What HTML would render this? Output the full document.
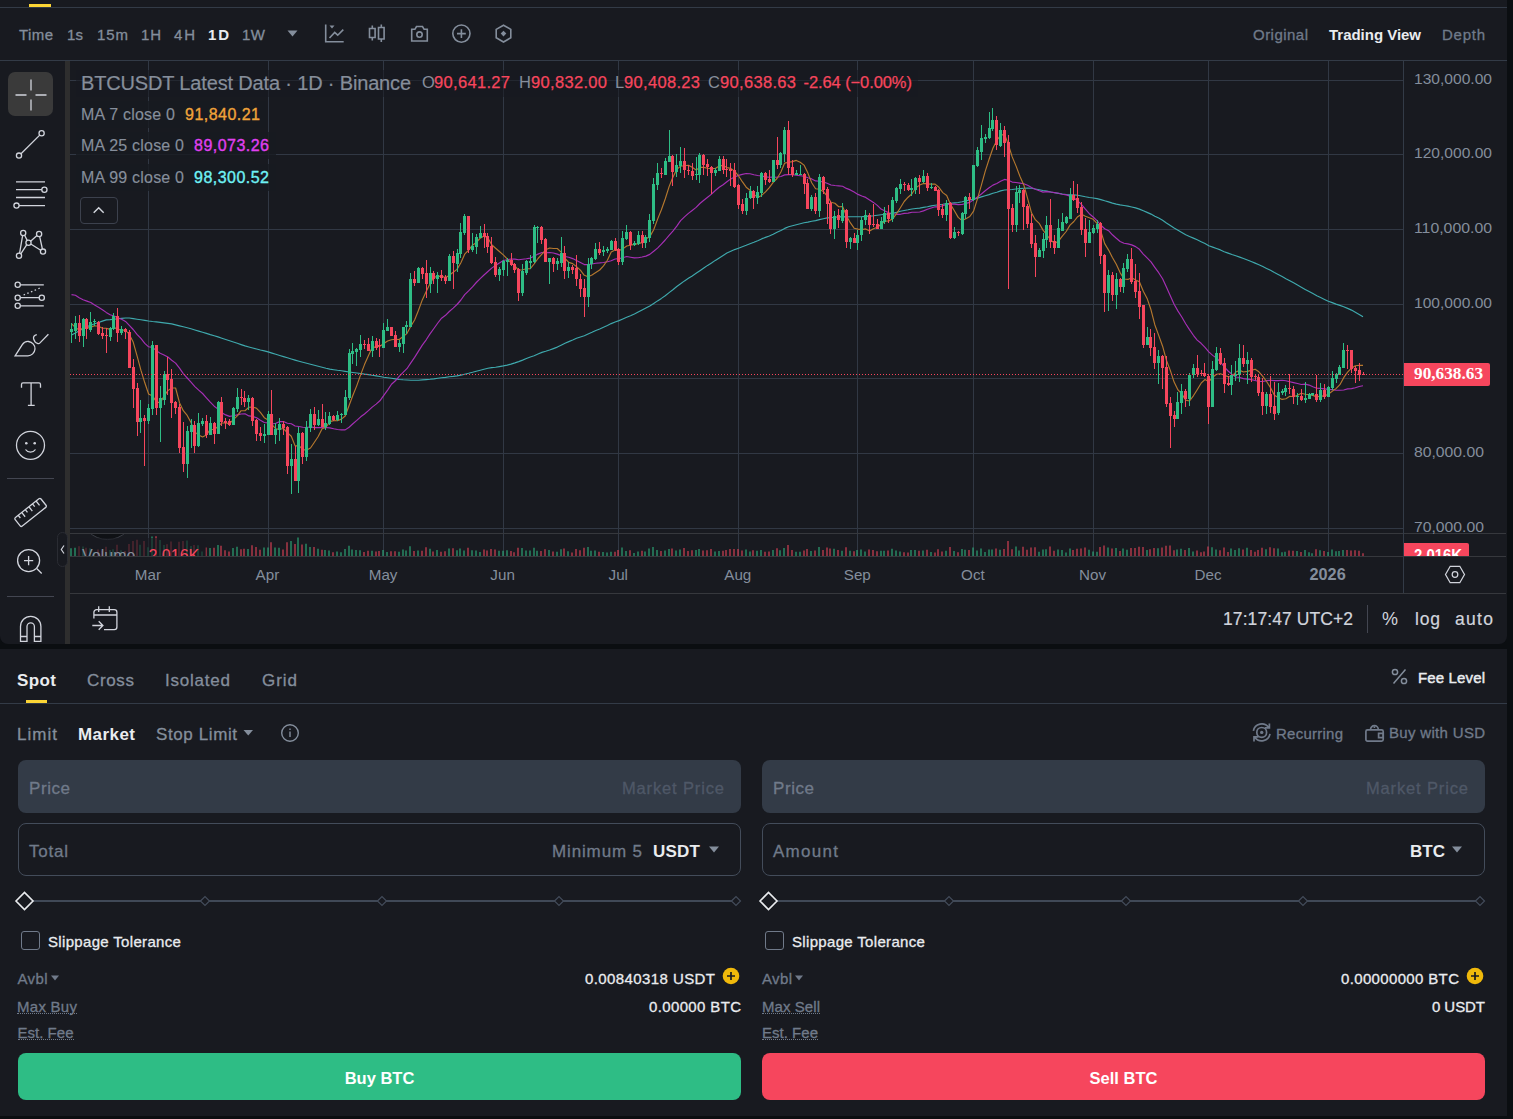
<!DOCTYPE html><html><head><meta charset="utf-8"><title>BTCUSDT</title><style>
*{box-sizing:border-box;margin:0;padding:0}
html,body{width:1513px;height:1119px;overflow:hidden;background:#0b0e11;font-family:"Liberation Sans",sans-serif}
.t{position:absolute;white-space:nowrap}
#chartp{position:absolute;left:0;top:0;width:1507px;height:644px;background:#181a20;border-radius:0 0 8px 8px;overflow:hidden}
#lower{position:absolute;left:0;top:649px;width:1507px;height:467px;background:#181a20;overflow:hidden}
.hl{position:absolute;height:1px;background:#333b47}
.vl{position:absolute;width:1px;background:#333b47}
svg.i{position:absolute;overflow:visible}
.inp{position:absolute;height:53px;width:723px;border-radius:8px}
.dis{background:#333b47}
.brd{border:1px solid #434c5a}
.btn{position:absolute;height:47px;width:723px;border-radius:8px;top:404px;color:#fff;font-weight:700;font-size:16.5px;text-align:center;line-height:50px}
.cb{position:absolute;width:19px;height:19px;border:1px solid #707a8a;border-radius:3px;top:282px}
.du{border-bottom:1px dotted #707a8a}
</style></head><body>
<div id="chartp">
<div class="hl" style="left:0;top:7px;width:1507px"></div>
<div style="position:absolute;left:29px;top:4px;width:22px;height:3px;background:#fcd535"></div>
<div class="hl" style="left:0;top:60px;width:1507px"></div>
<span class="t" style="letter-spacing:0.41px;font-size:15px;color:#848e9c;font-weight:400;top:25.5px;height:18.0px;line-height:18.0px;left:19px;-webkit-text-stroke:0.3px;">Time</span>
<span class="t" style="letter-spacing:0.16px;font-size:15px;color:#848e9c;font-weight:400;top:25.5px;height:18.0px;line-height:18.0px;left:67px;-webkit-text-stroke:0.3px;">1s</span>
<span class="t" style="letter-spacing:0.91px;font-size:15px;color:#848e9c;font-weight:400;top:25.5px;height:18.0px;line-height:18.0px;left:97px;-webkit-text-stroke:0.3px;">15m</span>
<span class="t" style="letter-spacing:0.81px;font-size:15px;color:#848e9c;font-weight:400;top:25.5px;height:18.0px;line-height:18.0px;left:141px;-webkit-text-stroke:0.3px;">1H</span>
<span class="t" style="letter-spacing:1.81px;font-size:15px;color:#848e9c;font-weight:400;top:25.5px;height:18.0px;line-height:18.0px;left:174px;-webkit-text-stroke:0.3px;">4H</span>
<span class="t" style="letter-spacing:1.81px;font-size:15px;color:#eaecef;font-weight:700;top:25.5px;height:18.0px;line-height:18.0px;left:208px;">1D</span>
<span class="t" style="letter-spacing:0.50px;font-size:15px;color:#848e9c;font-weight:400;top:25.5px;height:18.0px;line-height:18.0px;left:242px;-webkit-text-stroke:0.3px;">1W</span>
<span class="t" style="letter-spacing:0.47px;font-size:15px;color:#707a8a;font-weight:400;top:25.5px;height:18.0px;line-height:18.0px;left:1253px;-webkit-text-stroke:0.3px;">Original</span>
<span class="t" style="letter-spacing:-0.02px;font-size:15px;color:#eaecef;font-weight:700;top:25.5px;height:18.0px;line-height:18.0px;left:1329px;">Trading View</span>
<span class="t" style="letter-spacing:0.74px;font-size:15px;color:#707a8a;font-weight:400;top:25.5px;height:18.0px;line-height:18.0px;left:1442px;-webkit-text-stroke:0.3px;">Depth</span>
<svg class="i" style="left:0;top:0" width="600" height="61" fill="none" stroke="#848e9c" stroke-width="1.6">
<path d="M287.5 30.5h10l-5 6z" fill="#848e9c" stroke="none"/>
<path d="M325.7 24.5v17.3h18M329.5 38l5.2-5.6 3 2.8 5.6-5.6" /><path d="M329.5 25.6h5l-2.5 3z" fill="#848e9c" stroke="none"/>
<path d="M372.3 25.5v3m0 9v3M369.5 28.5h5.6v9h-5.6zM381.3 24.5v3m0 11.5v3M378.5 27.5h5.6v11.5h-5.6z"/>
<path d="M411.7 41V29.3h3.2l1.6-2.8h6l1.6 2.8h3.2V41z"/><circle cx="419.5" cy="34.6" r="2.7"/>
<circle cx="461.4" cy="33.6" r="8.6"/><path d="M457 33.6h8.8M461.4 29.2v8.8"/>
<path d="M503.5 25.2l7.3 4.2v8.4l-7.3 4.2-7.3-4.2v-8.4z"/><path d="M503.5 30.8l2.8 2.8-2.8 2.8-2.8-2.8z" fill="#848e9c" stroke="none"/>
</svg>
<div style="position:absolute;left:65px;top:61px;width:5px;height:583px;background:#2e2e2e"></div>
<div style="position:absolute;left:8px;top:72px;width:45px;height:44px;border-radius:7px;background:#3a3a3a"></div>
<svg class="i" style="left:0;top:0" width="70" height="644" fill="none" stroke="#d1d4dc" stroke-width="1.3">
<path d="M31 79.5v11M31 99.5v11M15.5 95h11M35.5 95h11"/>
<circle cx="41.6" cy="133.2" r="2.6"/><circle cx="19" cy="155.6" r="2.6"/><path d="M21 153.7L39.7 135.1"/>
<path d="M16 181.8h29M16 189.7h26M16 197.5h29M19 205.6h26"/><circle cx="44.4" cy="189.7" r="2.6"/><circle cx="16.5" cy="205.6" r="2.6"/>
<circle cx="23.2" cy="233" r="2.6"/><circle cx="39.1" cy="234" r="2.6"/><circle cx="28.5" cy="242.7" r="2.6"/><circle cx="43" cy="251.6" r="2.6"/><circle cx="19" cy="255.7" r="2.6"/>
<path d="M22.6 235.6L19.6 253.1M24.6 235.2L27.2 240.4M20.8 253.8L26.8 244.7M30.6 241.2L37 235.6M30.8 244L40.7 250.3M39.7 236.6L42.4 249"/>
<circle cx="17.7" cy="284.8" r="2.6"/><circle cx="17.7" cy="297.7" r="2.6"/><circle cx="41.8" cy="297.7" r="2.6"/><circle cx="17.7" cy="305.8" r="2.6"/>
<path d="M20.3 284.8h23.5M20.3 297.7h19M20.3 305.8h23.5"/><path d="M23.6 295L41.3 287.5" stroke-dasharray="1.5 2.5"/>
<path d="M15.1 355.9L22.3 344.7C24 342 26.5 341.3 28.5 341.5C32.5 342 35.3 345.5 35 349C34.6 353 31.5 355.8 28 355.8Z"/><path d="M36.8 334.6C34.5 335.2 33.2 336.8 33.6 338.8C34.2 341.2 36 343 38 343.6C38.8 343.8 39.5 343.4 40 342.9L48.4 334.2"/>
<path d="M21.5 387.7v-3.3a1.5 1.5 0 0 1 1.5-1.5h16a1.5 1.5 0 0 1 1.5 1.5v3.3M31.1 382.9V405.4M27.9 405.4h6.8"/>
<circle cx="30.5" cy="445.3" r="14"/><circle cx="26.3" cy="443.3" r="1.3" fill="#d1d4dc" stroke="none"/><circle cx="34.7" cy="443.3" r="1.3" fill="#d1d4dc" stroke="none"/><path d="M25.5 449.5c2.5 3.6 7.5 3.6 10 0"/>
<g transform="translate(30.6 512.4) rotate(-38.5)"><rect x="-16.5" y="-5.5" width="33" height="11" rx="1.5"/><path d="M-11.5 -5.5v3.5M-7 -5.5v5.5M-2.4 -5.5v3.5M2.2 -5.5v5.5M6.8 -5.5v3.5M11.4 -5.5v5.5"/></g>
<circle cx="28.6" cy="560.6" r="11"/><path d="M24 560.6h9.2M28.6 556v9.2M36.7 568.5l5 5"/>
<path d="M20.5 641.4V626.5a10.2 10.2 0 0 1 20.4 0v14.9h-6.5V626.5a3.7 3.7 0 0 0-7.4 0v14.9zM20.5 636.5h6.5M34.4 636.5h6.5"/>
</svg>
<div class="hl" style="left:7px;top:478px;width:47px;background:#434651"></div>
<div class="hl" style="left:7px;top:596px;width:47px;background:#434651"></div>
<svg width="1507" height="594" viewBox="0 0 1507 594" style="position:absolute;left:0;top:0">
<defs><clipPath id="cp"><rect x="70" y="61" width="1333" height="472"/></clipPath><clipPath id="cv"><rect x="70" y="534" width="1333" height="22"/></clipPath><clipPath id="ca"><rect x="1404" y="534" width="103" height="22"/></clipPath></defs>
<path d="M148.5 61V556M268.5 61V556M383.5 61V556M503.5 61V556M618.5 61V556M738.5 61V556M857.5 61V556M973.5 61V556M1093.5 61V556M1208.5 61V556M1328.5 61V556M70 80.5H1403M70 154.5H1403M70 229.5H1403M70 304.5H1403M70 378.5H1403M70 453.5H1403M70 528.5H1403" stroke="#313844" stroke-width="1" fill="none" shape-rendering="crispEdges"/>
<g clip-path="url(#cp)" fill="none" stroke-width="1.15" stroke-linejoin="round">
<path d="M71.5 335.1 L75.4 333.0 L79.2 330.8 L83.1 328.7 L86.9 326.6 L90.8 325.2 L94.6 323.8 L98.5 322.5 L102.4 321.1 L106.2 319.9 L110.1 319.6 L113.9 319.2 L117.8 318.8 L121.6 318.4 L125.5 318.0 L129.3 318.0 L133.2 318.6 L137.0 319.2 L140.9 319.8 L144.8 320.4 L148.6 321.0 L152.5 321.5 L156.3 321.9 L160.2 322.4 L164.0 322.9 L167.9 323.4 L171.7 323.9 L175.6 324.9 L179.5 325.9 L183.3 326.8 L187.2 327.8 L191.0 328.8 L194.9 330.0 L198.7 331.1 L202.6 332.3 L206.4 333.4 L210.3 334.6 L214.2 335.7 L218.0 336.9 L221.9 338.2 L225.7 339.5 L229.6 340.8 L233.4 342.0 L237.3 343.3 L241.1 344.6 L245.0 345.9 L248.9 347.0 L252.7 348.0 L256.6 349.0 L260.4 350.0 L264.3 350.9 L268.1 351.9 L272.0 353.1 L275.8 354.3 L279.7 355.5 L283.5 356.6 L287.4 357.8 L291.3 359.0 L295.1 360.1 L299.0 361.2 L302.8 362.2 L306.7 363.2 L310.5 364.2 L314.4 365.3 L318.2 366.3 L322.1 367.3 L326.0 368.3 L329.8 369.1 L333.7 369.7 L337.5 370.3 L341.4 370.8 L345.2 371.4 L349.1 372.0 L352.9 372.5 L356.8 373.0 L360.7 373.5 L364.5 374.1 L368.4 374.6 L372.2 375.3 L376.1 375.9 L379.9 376.5 L383.8 377.2 L387.6 377.7 L391.5 378.3 L395.4 378.9 L399.2 379.5 L403.1 379.8 L406.9 380.0 L410.8 380.2 L414.6 380.3 L418.5 380.2 L422.3 379.9 L426.2 379.6 L430.0 379.3 L433.9 378.9 L437.8 378.3 L441.6 377.8 L445.5 377.4 L449.3 376.7 L453.2 376.4 L457.0 375.9 L460.9 375.1 L464.7 374.2 L468.6 373.3 L472.5 372.3 L476.3 371.2 L480.2 370.2 L484.0 369.2 L487.9 368.3 L491.7 367.6 L495.6 367.2 L499.4 366.6 L503.3 365.9 L507.2 365.1 L511.0 364.1 L514.9 362.9 L518.7 361.6 L522.6 360.1 L526.4 358.5 L530.3 357.0 L534.1 355.8 L538.0 354.0 L541.9 352.4 L545.7 351.3 L549.6 350.0 L553.4 348.6 L557.3 347.1 L561.1 345.2 L565.0 343.2 L568.8 341.6 L572.7 340.0 L576.5 338.3 L580.4 337.0 L584.3 335.7 L588.1 334.0 L592.0 332.3 L595.8 330.5 L599.7 329.0 L603.5 327.2 L607.4 325.5 L611.2 323.6 L615.1 322.0 L619.0 320.6 L622.8 319.0 L626.7 317.3 L630.5 315.8 L634.4 314.0 L638.2 312.0 L642.1 310.0 L645.9 308.0 L649.8 306.1 L653.7 303.5 L657.5 300.9 L661.4 298.4 L665.2 295.7 L669.1 292.6 L672.9 289.7 L676.8 286.5 L680.6 283.8 L684.5 280.9 L688.4 278.3 L692.2 275.9 L696.1 273.3 L699.9 270.7 L703.8 268.0 L707.6 265.4 L711.5 263.0 L715.3 260.4 L719.2 257.9 L723.1 255.4 L726.9 253.1 L730.8 251.3 L734.6 249.6 L738.5 248.2 L742.3 246.8 L746.2 245.3 L750.0 243.7 L753.9 242.3 L757.7 240.7 L761.6 238.9 L765.5 237.4 L769.3 236.0 L773.2 234.2 L777.0 232.3 L780.9 230.4 L784.7 228.4 L788.6 226.8 L792.4 225.8 L796.3 224.7 L800.2 223.7 L804.0 222.8 L807.9 222.1 L811.7 221.3 L815.6 220.6 L819.4 219.6 L823.3 218.7 L827.1 217.9 L831.0 217.7 L834.9 217.2 L838.7 216.9 L842.6 216.6 L846.4 216.9 L850.3 216.8 L854.1 216.7 L858.0 216.7 L861.8 216.6 L865.7 216.4 L869.6 216.1 L873.4 215.8 L877.3 215.3 L881.1 214.8 L885.0 214.3 L888.8 213.9 L892.7 213.3 L896.5 212.4 L900.4 211.3 L904.2 210.5 L908.1 209.8 L912.0 209.0 L915.8 208.5 L919.7 208.1 L923.5 207.4 L927.4 206.7 L931.2 205.9 L935.1 205.2 L938.9 204.7 L942.8 204.3 L946.7 203.6 L950.5 203.3 L954.4 202.9 L958.2 202.5 L962.1 201.7 L965.9 200.7 L969.8 200.0 L973.6 199.1 L977.5 198.1 L981.4 196.9 L985.2 195.8 L989.1 194.6 L992.9 193.3 L996.8 192.3 L1000.6 190.9 L1004.5 190.0 L1008.3 189.7 L1012.2 189.5 L1016.1 189.0 L1019.9 188.6 L1023.8 188.2 L1027.6 188.1 L1031.5 188.3 L1035.3 189.0 L1039.2 189.8 L1043.0 190.5 L1046.9 191.1 L1050.7 192.0 L1054.6 192.7 L1058.5 193.4 L1062.3 194.0 L1066.2 194.5 L1070.0 194.7 L1073.9 194.9 L1077.7 195.3 L1081.6 196.0 L1085.4 196.8 L1089.3 197.5 L1093.2 198.0 L1097.0 198.6 L1100.9 199.6 L1104.7 200.8 L1108.6 201.9 L1112.4 203.1 L1116.3 204.1 L1120.1 204.9 L1124.0 205.5 L1127.9 206.1 L1131.7 207.0 L1135.6 207.9 L1139.4 209.1 L1143.3 210.8 L1147.1 212.4 L1151.0 214.1 L1154.8 216.2 L1158.7 218.1 L1162.6 220.3 L1166.4 223.0 L1170.3 225.5 L1174.1 228.0 L1178.0 230.3 L1181.8 232.5 L1185.7 234.7 L1189.5 236.4 L1193.4 238.1 L1197.2 239.8 L1201.1 241.7 L1205.0 243.6 L1208.8 245.7 L1212.7 247.1 L1216.5 248.5 L1220.4 249.9 L1224.2 251.7 L1228.1 253.1 L1231.9 254.5 L1235.8 255.8 L1239.7 257.1 L1243.5 258.5 L1247.4 260.0 L1251.2 261.5 L1255.1 263.1 L1258.9 264.7 L1262.8 266.6 L1266.6 268.4 L1270.5 270.3 L1274.4 272.5 L1278.2 274.5 L1282.1 276.6 L1285.9 278.7 L1289.8 280.7 L1293.6 282.8 L1297.5 285.0 L1301.3 287.2 L1305.2 289.4 L1309.1 291.5 L1312.9 293.6 L1316.8 295.7 L1320.6 297.5 L1324.5 299.4 L1328.3 301.2 L1332.2 302.6 L1336.0 304.1 L1339.9 305.4 L1343.7 306.8 L1347.6 308.4 L1351.5 310.1 L1355.3 312.2 L1359.2 314.4 L1363.0 316.8" stroke="#3fa9ad"/>
<path d="M71.5 294.6 L75.4 295.3 L79.2 297.8 L83.1 299.7 L86.9 301.1 L90.8 302.5 L94.6 305.0 L98.5 307.3 L102.4 309.7 L106.2 312.4 L110.1 314.8 L113.9 316.0 L117.8 317.8 L121.6 319.2 L125.5 321.4 L129.3 325.4 L133.2 329.5 L137.0 334.4 L140.9 338.3 L144.8 343.3 L148.6 346.8 L152.5 347.4 L156.3 350.6 L160.2 353.3 L164.0 355.0 L167.9 357.0 L171.7 360.2 L175.6 363.1 L179.5 368.2 L183.3 373.6 L187.2 378.0 L191.0 382.2 L194.9 386.6 L198.7 390.1 L202.6 393.5 L206.4 397.8 L210.3 402.1 L214.2 406.2 L218.0 409.1 L221.9 412.7 L225.7 414.9 L229.6 416.4 L233.4 415.8 L237.3 414.9 L241.1 414.0 L245.0 413.8 L248.9 415.9 L252.7 416.4 L256.6 417.8 L260.4 420.3 L264.3 422.5 L268.1 422.9 L272.0 424.0 L275.8 423.3 L279.7 421.6 L283.5 421.5 L287.4 423.2 L291.3 423.7 L295.1 426.0 L299.0 426.5 L302.8 427.3 L306.7 427.5 L310.5 426.7 L314.4 427.6 L318.2 427.5 L322.1 427.6 L326.0 427.5 L329.8 427.9 L333.7 428.8 L337.5 429.5 L341.4 429.9 L345.2 429.9 L349.1 427.2 L352.9 423.8 L356.8 420.4 L360.7 416.8 L364.5 414.0 L368.4 410.6 L372.2 407.1 L376.1 404.1 L379.9 400.8 L383.8 395.3 L387.6 390.1 L391.5 384.3 L395.4 380.8 L399.2 376.3 L403.1 372.3 L406.9 368.7 L410.8 362.9 L414.6 357.4 L418.5 351.1 L422.3 345.1 L426.2 339.8 L430.0 333.9 L433.9 328.5 L437.8 323.0 L441.6 318.2 L445.5 315.3 L449.3 311.5 L453.2 308.1 L457.0 304.5 L460.9 300.0 L464.7 294.6 L468.6 290.9 L472.5 286.9 L476.3 282.5 L480.2 278.6 L484.0 275.0 L487.9 271.5 L491.7 268.1 L495.6 265.4 L499.4 263.0 L503.3 260.5 L507.2 259.7 L511.0 259.0 L514.9 259.1 L518.7 259.8 L522.6 259.3 L526.4 258.8 L530.3 258.1 L534.1 256.2 L538.0 254.1 L541.9 252.5 L545.7 252.7 L549.6 252.5 L553.4 253.0 L557.3 254.1 L561.1 255.6 L565.0 256.5 L568.8 257.3 L572.7 258.6 L576.5 260.5 L580.4 262.6 L584.3 264.6 L588.1 264.6 L592.0 264.0 L595.8 263.2 L599.7 262.9 L603.5 262.5 L607.4 261.8 L611.2 260.7 L615.1 259.0 L619.0 258.6 L622.8 257.7 L626.7 256.5 L630.5 257.2 L634.4 257.9 L638.2 257.7 L642.1 257.0 L645.9 256.1 L649.8 254.4 L653.7 251.3 L657.5 248.1 L661.4 244.2 L665.2 240.0 L669.1 235.4 L672.9 231.1 L676.8 226.1 L680.6 220.7 L684.5 216.9 L688.4 213.4 L692.2 210.5 L696.1 207.4 L699.9 203.5 L703.8 200.2 L707.6 197.2 L711.5 194.1 L715.3 190.5 L719.2 187.3 L723.1 184.8 L726.9 181.8 L730.8 178.9 L734.6 177.0 L738.5 175.4 L742.3 174.4 L746.2 173.5 L750.0 173.8 L753.9 174.8 L757.7 175.5 L761.6 176.0 L765.5 176.9 L769.3 177.3 L773.2 177.1 L777.0 177.2 L780.9 176.5 L784.7 174.9 L788.6 174.6 L792.4 174.6 L796.3 175.3 L800.2 175.7 L804.0 176.3 L807.9 177.8 L811.7 178.9 L815.6 180.9 L819.4 181.2 L823.3 182.0 L827.1 183.3 L831.0 185.0 L834.9 185.5 L838.7 185.9 L842.6 186.3 L846.4 188.4 L850.3 189.9 L854.1 192.0 L858.0 194.4 L861.8 196.0 L865.7 197.4 L869.6 200.0 L873.4 202.4 L877.3 205.4 L881.1 209.1 L885.0 210.9 L888.8 212.7 L892.7 213.8 L896.5 214.3 L900.4 214.3 L904.2 213.4 L908.1 213.1 L912.0 212.2 L915.8 212.3 L919.7 212.0 L923.5 210.9 L927.4 209.2 L931.2 208.0 L935.1 206.8 L938.9 206.8 L942.8 205.8 L946.7 204.4 L950.5 204.2 L954.4 204.1 L958.2 204.6 L962.1 204.5 L965.9 203.4 L969.8 202.4 L973.6 199.8 L977.5 197.0 L981.4 194.0 L985.2 190.7 L989.1 187.8 L992.9 185.1 L996.8 183.5 L1000.6 181.3 L1004.5 179.4 L1008.3 180.2 L1012.2 182.1 L1016.1 182.5 L1019.9 183.1 L1023.8 183.8 L1027.6 185.3 L1031.5 187.4 L1035.3 189.3 L1039.2 190.7 L1043.0 192.1 L1046.9 191.6 L1050.7 192.0 L1054.6 192.6 L1058.5 193.2 L1062.3 194.2 L1066.2 194.9 L1070.0 196.1 L1073.9 198.0 L1077.7 200.9 L1081.6 204.6 L1085.4 209.2 L1089.3 213.7 L1093.2 217.0 L1097.0 220.7 L1100.9 225.3 L1104.7 228.7 L1108.6 230.7 L1112.4 234.8 L1116.3 238.3 L1120.1 241.5 L1124.0 243.3 L1127.9 243.9 L1131.7 244.9 L1135.6 246.6 L1139.4 249.3 L1143.3 254.1 L1147.1 257.9 L1151.0 261.9 L1154.8 267.3 L1158.7 272.7 L1162.6 278.7 L1166.4 287.1 L1170.3 295.7 L1174.1 304.2 L1178.0 311.1 L1181.8 317.0 L1185.7 323.7 L1189.5 329.6 L1193.4 335.3 L1197.2 340.1 L1201.1 343.3 L1205.0 347.3 L1208.8 351.8 L1212.7 355.4 L1216.5 358.0 L1220.4 361.9 L1224.2 366.9 L1228.1 371.0 L1231.9 374.3 L1235.8 377.0 L1239.7 377.5 L1243.5 378.6 L1247.4 379.1 L1251.2 379.6 L1255.1 380.5 L1258.9 381.5 L1262.8 381.5 L1266.6 380.6 L1270.5 380.2 L1274.4 380.6 L1278.2 380.6 L1282.1 380.3 L1285.9 380.8 L1289.8 381.7 L1293.6 382.6 L1297.5 383.5 L1301.3 384.5 L1305.2 384.1 L1309.1 385.1 L1312.9 386.8 L1316.8 388.2 L1320.6 388.4 L1324.5 388.9 L1328.3 389.4 L1332.2 389.6 L1336.0 390.2 L1339.9 390.3 L1343.7 390.0 L1347.6 388.9 L1351.5 388.6 L1355.3 387.7 L1359.2 386.5 L1363.0 385.7" stroke="#a62fb5"/>
<path d="M71.5 323.6 L75.4 327.6 L79.2 329.9 L83.1 328.4 L86.9 328.3 L90.8 327.1 L94.6 325.7 L98.5 326.3 L102.4 328.2 L106.2 328.2 L110.1 329.4 L113.9 327.5 L117.8 329.1 L121.6 330.2 L125.5 330.0 L129.3 334.5 L133.2 342.1 L137.0 355.6 L140.9 370.2 L144.8 382.8 L148.6 394.0 L152.5 395.9 L156.3 401.6 L160.2 403.0 L164.0 396.1 L167.9 390.6 L171.7 388.0 L175.6 388.0 L179.5 402.7 L183.3 410.7 L187.2 415.4 L191.0 422.6 L194.9 432.1 L198.7 435.0 L202.6 436.9 L206.4 435.1 L210.3 429.2 L214.2 429.7 L218.0 426.4 L221.9 423.0 L225.7 423.0 L229.6 423.6 L233.4 419.6 L237.3 415.9 L241.1 410.7 L245.0 410.7 L248.9 407.3 L252.7 407.0 L256.6 408.3 L260.4 412.4 L264.3 417.7 L268.1 419.9 L272.0 424.6 L275.8 428.9 L279.7 429.3 L283.5 428.5 L287.4 432.8 L291.3 436.3 L295.1 445.9 L299.0 445.7 L302.8 449.6 L306.7 450.1 L310.5 448.0 L314.4 442.2 L318.2 436.5 L322.1 428.7 L326.0 427.3 L329.8 421.6 L333.7 420.6 L337.5 420.7 L341.4 419.1 L345.2 416.0 L349.1 405.5 L352.9 395.2 L356.8 385.6 L360.7 374.6 L364.5 364.6 L368.4 355.7 L372.2 347.6 L376.1 346.9 L379.9 346.2 L383.8 343.5 L387.6 341.0 L391.5 339.8 L395.4 339.2 L399.2 339.5 L403.1 336.5 L406.9 333.6 L410.8 326.3 L414.6 320.0 L418.5 310.3 L422.3 299.9 L426.2 291.4 L430.0 283.7 L433.9 277.1 L437.8 276.6 L441.6 275.9 L445.5 277.8 L449.3 275.2 L453.2 272.2 L457.0 269.4 L460.9 262.7 L464.7 254.2 L468.6 250.2 L472.5 245.2 L476.3 242.5 L480.2 238.2 L484.0 235.9 L487.9 238.0 L491.7 244.7 L495.6 248.2 L499.4 251.5 L503.3 254.9 L507.2 258.8 L511.0 262.8 L514.9 266.0 L518.7 270.3 L522.6 269.8 L526.4 268.7 L530.3 268.6 L534.1 264.0 L538.0 258.5 L541.9 254.2 L545.7 249.8 L549.6 248.0 L553.4 248.5 L557.3 248.5 L561.1 252.2 L565.0 258.5 L568.8 262.4 L572.7 263.6 L576.5 266.6 L580.4 270.1 L584.3 275.3 L588.1 276.8 L592.0 275.0 L595.8 272.5 L599.7 270.0 L603.5 265.9 L607.4 260.2 L611.2 252.1 L615.1 250.1 L619.0 250.6 L622.8 248.9 L626.7 246.0 L630.5 245.3 L634.4 244.4 L638.2 243.6 L642.1 242.6 L645.9 239.1 L649.8 236.6 L653.7 229.7 L657.5 219.4 L661.4 209.7 L665.2 199.0 L669.1 186.6 L672.9 177.3 L676.8 169.4 L680.6 166.1 L684.5 165.7 L688.4 165.2 L692.2 167.3 L696.1 169.9 L699.9 167.4 L703.8 167.4 L707.6 168.3 L711.5 168.6 L715.3 168.5 L719.2 166.0 L723.1 165.4 L726.9 167.6 L730.8 168.4 L734.6 171.2 L738.5 175.8 L742.3 181.7 L746.2 187.2 L750.0 190.3 L753.9 194.4 L757.7 197.4 L761.6 195.4 L765.5 191.9 L769.3 187.6 L773.2 182.3 L777.0 178.5 L780.9 172.0 L784.7 163.1 L788.6 162.3 L792.4 161.6 L796.3 160.4 L800.2 162.3 L804.0 165.1 L807.9 173.1 L811.7 182.7 L815.6 188.8 L819.4 189.2 L823.3 191.5 L827.1 195.8 L831.0 202.2 L834.9 203.3 L838.7 206.7 L842.6 206.5 L846.4 215.8 L850.3 222.7 L854.1 228.2 L858.0 229.1 L861.8 229.6 L865.7 228.9 L869.6 231.0 L873.4 228.7 L877.3 227.3 L881.1 224.3 L885.0 221.1 L888.8 221.0 L892.7 218.8 L896.5 213.6 L900.4 207.7 L904.2 201.5 L908.1 197.2 L912.0 193.7 L915.8 187.8 L919.7 185.1 L923.5 183.4 L927.4 183.9 L931.2 184.1 L935.1 184.1 L938.9 187.3 L942.8 192.6 L946.7 195.5 L950.5 204.4 L954.4 210.8 L958.2 217.4 L962.1 220.6 L965.9 218.7 L969.8 216.5 L973.6 211.1 L977.5 198.6 L981.4 185.1 L985.2 171.4 L989.1 159.3 L992.9 148.2 L996.8 140.4 L1000.6 135.4 L1004.5 134.3 L1008.3 144.4 L1012.2 156.9 L1016.1 166.1 L1019.9 176.2 L1023.8 184.9 L1027.6 198.3 L1031.5 212.9 L1035.3 219.7 L1039.2 223.3 L1043.0 230.1 L1046.9 235.0 L1050.7 240.0 L1054.6 243.4 L1058.5 241.1 L1062.3 236.1 L1066.2 231.5 L1070.0 225.1 L1073.9 221.5 L1077.7 216.7 L1081.6 214.2 L1085.4 216.3 L1089.3 217.8 L1093.2 219.3 L1097.0 223.4 L1100.9 231.5 L1104.7 243.6 L1108.6 250.1 L1112.4 257.5 L1116.3 264.2 L1120.1 272.6 L1124.0 279.0 L1127.9 279.4 L1131.7 277.7 L1135.6 280.1 L1139.4 281.8 L1143.3 291.3 L1147.1 298.4 L1151.0 309.8 L1154.8 324.7 L1158.7 335.4 L1162.6 346.2 L1166.4 360.2 L1170.3 370.4 L1174.1 382.1 L1178.0 389.9 L1181.8 393.9 L1185.7 400.1 L1189.5 401.0 L1193.4 395.8 L1197.2 389.7 L1201.1 383.2 L1205.0 379.5 L1208.8 381.7 L1212.7 377.3 L1216.5 374.2 L1220.4 373.7 L1224.2 375.1 L1228.1 376.7 L1231.9 376.6 L1235.8 372.0 L1239.7 370.4 L1243.5 372.0 L1247.4 371.4 L1251.2 370.4 L1255.1 369.2 L1258.9 371.8 L1262.8 376.3 L1266.6 381.5 L1270.5 387.6 L1274.4 395.3 L1278.2 397.4 L1282.1 399.4 L1285.9 398.7 L1289.8 396.2 L1293.6 396.8 L1297.5 395.2 L1301.3 393.3 L1305.2 394.2 L1309.1 394.6 L1312.9 395.4 L1316.8 397.0 L1320.6 395.9 L1324.5 396.1 L1328.3 394.2 L1332.2 391.3 L1336.0 388.6 L1339.9 384.7 L1343.7 377.7 L1347.6 372.1 L1351.5 368.2 L1355.3 365.8 L1359.2 365.3 L1363.0 365.4" stroke="#b5782e"/>
</g>
<g clip-path="url(#cp)" shape-rendering="crispEdges"><path d="M71 323h1V343h-1ZM70 329h3V332h-3ZM75 316h1V339h-1ZM74 323h3V331h-3ZM83 318h1V347h-1ZM82 319h3V336h-3ZM90 312h1V332h-1ZM89 322h3V330h-3ZM94 319h1V326h-1ZM93 321h3V322h-3ZM110 327h1V341h-1ZM109 328h3V337h-3ZM113 313h1V330h-1ZM112 316h3V329h-3ZM121 326h1V335h-1ZM120 329h3V333h-3ZM140 400h1V433h-1ZM139 418h3V422h-3ZM148 404h1V424h-1ZM147 408h3V421h-3ZM152 341h1V415h-1ZM151 345h3V409h-3ZM160 386h1V442h-1ZM159 398h3V408h-3ZM164 371h1V405h-1ZM163 374h3V400h-3ZM187 426h1V478h-1ZM186 431h3V464h-3ZM191 419h1V448h-1ZM190 425h3V432h-3ZM198 413h1V447h-1ZM197 423h3V446h-3ZM202 418h1V426h-1ZM201 421h3V424h-3ZM210 417h1V435h-1ZM209 423h3V435h-3ZM218 401h1V434h-1ZM217 402h3V434h-3ZM233 407h1V425h-1ZM232 408h3V425h-3ZM237 388h1V412h-1ZM236 397h3V409h-3ZM248 395h1V410h-1ZM247 398h3V402h-3ZM264 424h1V443h-1ZM263 434h3V436h-3ZM268 411h1V435h-1ZM267 414h3V435h-3ZM275 423h1V444h-1ZM274 429h3V435h-3ZM279 418h1V441h-1ZM278 424h3V430h-3ZM291 444h1V494h-1ZM290 459h3V466h-3ZM298 427h1V493h-1ZM297 433h3V481h-3ZM306 421h1V461h-1ZM305 427h3V457h-3ZM310 409h1V432h-1ZM309 414h3V428h-3ZM318 410h1V426h-1ZM317 419h3V425h-3ZM325 412h1V430h-1ZM324 423h3V427h-3ZM329 412h1V425h-1ZM328 416h3V424h-3ZM337 411h1V421h-1ZM336 415h3V420h-3ZM341 413h1V423h-1ZM340 414h3V415h-3ZM345 390h1V415h-1ZM344 397h3V415h-3ZM349 349h1V400h-1ZM348 353h3V398h-3ZM352 343h1V364h-1ZM351 351h3V354h-3ZM356 348h1V366h-1ZM355 349h3V352h-3ZM360 335h1V357h-1ZM359 344h3V350h-3ZM372 336h1V357h-1ZM371 341h3V351h-3ZM383 323h1V348h-1ZM382 330h3V348h-3ZM387 319h1V331h-1ZM386 327h3V331h-3ZM399 340h1V352h-1ZM398 343h3V347h-3ZM403 327h1V353h-1ZM402 327h3V344h-3ZM406 321h1V334h-1ZM405 325h3V327h-3ZM410 273h1V327h-1ZM409 279h3V327h-3ZM418 267h1V283h-1ZM417 268h3V283h-3ZM430 267h1V293h-1ZM429 273h3V284h-3ZM437 272h1V293h-1ZM436 275h3V279h-3ZM449 254h1V281h-1ZM448 256h3V281h-3ZM457 249h1V272h-1ZM456 253h3V264h-3ZM460 223h1V258h-1ZM459 232h3V254h-3ZM464 214h1V235h-1ZM463 216h3V233h-3ZM472 233h1V252h-1ZM471 246h3V250h-3ZM476 234h1V254h-1ZM475 237h3V247h-3ZM480 226h1V238h-1ZM479 233h3V238h-3ZM499 267h1V281h-1ZM498 269h3V275h-3ZM503 260h1V276h-1ZM502 261h3V270h-3ZM507 258h1V276h-1ZM506 260h3V262h-3ZM522 264h1V296h-1ZM521 271h3V293h-3ZM526 260h1V275h-1ZM525 261h3V273h-3ZM530 255h1V269h-1ZM529 261h3V263h-3ZM534 225h1V263h-1ZM533 227h3V262h-3ZM537 226h1V243h-1ZM536 227h3V228h-3ZM549 258h1V284h-1ZM548 258h3V262h-3ZM557 258h1V270h-1ZM556 261h3V264h-3ZM561 237h1V267h-1ZM560 253h3V263h-3ZM568 262h1V278h-1ZM567 267h3V271h-3ZM588 258h1V307h-1ZM587 264h3V297h-3ZM591 257h1V269h-1ZM590 258h3V264h-3ZM595 243h1V260h-1ZM594 249h3V259h-3ZM603 246h1V256h-1ZM602 250h3V252h-3ZM607 247h1V253h-1ZM606 249h3V251h-3ZM611 240h1V250h-1ZM610 241h3V250h-3ZM622 231h1V265h-1ZM621 238h3V262h-3ZM626 225h1V240h-1ZM625 232h3V239h-3ZM634 241h1V246h-1ZM633 243h3V245h-3ZM638 231h1V245h-1ZM637 235h3V244h-3ZM645 235h1V248h-1ZM644 237h3V243h-3ZM649 214h1V242h-1ZM648 220h3V238h-3ZM653 178h1V224h-1ZM652 184h3V221h-3ZM657 163h1V190h-1ZM656 173h3V185h-3ZM665 158h1V175h-1ZM664 161h3V175h-3ZM669 130h1V162h-1ZM668 156h3V162h-3ZM676 154h1V177h-1ZM675 165h3V172h-3ZM680 147h1V173h-1ZM679 161h3V166h-3ZM696 157h1V180h-1ZM695 174h3V175h-3ZM699 153h1V183h-1ZM698 155h3V175h-3ZM715 168h1V176h-1ZM714 170h3V173h-3ZM719 156h1V171h-1ZM718 159h3V171h-3ZM746 193h1V215h-1ZM745 198h3V211h-3ZM750 186h1V199h-1ZM749 191h3V198h-3ZM757 186h1V204h-1ZM756 192h3V198h-3ZM761 172h1V197h-1ZM760 173h3V193h-3ZM773 160h1V182h-1ZM772 160h3V182h-3ZM780 152h1V168h-1ZM779 153h3V165h-3ZM784 127h1V162h-1ZM783 130h3V154h-3ZM796 170h1V175h-1ZM795 173h3V175h-3ZM800 165h1V175h-1ZM799 174h3V175h-3ZM811 195h1V211h-1ZM810 197h3V209h-3ZM819 174h1V217h-1ZM818 177h3V211h-3ZM834 211h1V239h-1ZM833 216h3V229h-3ZM842 203h1V223h-1ZM841 210h3V221h-3ZM850 237h1V249h-1ZM849 238h3V242h-3ZM857 230h1V250h-1ZM856 235h3V243h-3ZM861 217h1V241h-1ZM860 220h3V235h-3ZM865 210h1V225h-1ZM864 215h3V220h-3ZM881 217h1V229h-1ZM880 221h3V229h-3ZM884 207h1V224h-1ZM883 213h3V222h-3ZM892 197h1V222h-1ZM891 200h3V219h-3ZM896 187h1V203h-1ZM895 188h3V201h-3ZM900 179h1V194h-1ZM899 184h3V189h-3ZM911 179h1V196h-1ZM910 188h3V190h-3ZM915 177h1V194h-1ZM914 178h3V190h-3ZM923 170h1V183h-1ZM922 176h3V182h-3ZM931 183h1V189h-1ZM930 187h3V188h-3ZM946 200h1V221h-1ZM945 203h3V215h-3ZM954 227h1V239h-1ZM953 232h3V238h-3ZM962 212h1V235h-1ZM961 213h3V234h-3ZM965 196h1V219h-1ZM964 197h3V214h-3ZM973 165h1V201h-1ZM972 165h3V200h-3ZM977 147h1V167h-1ZM976 150h3V166h-3ZM981 125h1V160h-1ZM980 138h3V152h-3ZM985 134h1V143h-1ZM984 137h3V139h-3ZM989 112h1V139h-1ZM988 128h3V138h-3ZM992 108h1V131h-1ZM991 120h3V129h-3ZM1000 123h1V147h-1ZM999 130h3V146h-3ZM1016 186h1V232h-1ZM1015 192h3V225h-3ZM1019 185h1V203h-1ZM1018 190h3V193h-3ZM1039 248h1V257h-1ZM1038 250h3V257h-3ZM1043 233h1V258h-1ZM1042 239h3V251h-3ZM1046 216h1V248h-1ZM1045 225h3V240h-3ZM1058 219h1V248h-1ZM1057 228h3V248h-3ZM1062 213h1V231h-1ZM1061 222h3V231h-3ZM1066 216h1V224h-1ZM1065 217h3V223h-3ZM1070 188h1V219h-1ZM1069 195h3V219h-3ZM1089 220h1V243h-1ZM1088 232h3V243h-3ZM1093 225h1V234h-1ZM1092 228h3V233h-3ZM1097 220h1V233h-1ZM1096 224h3V229h-3ZM1108 270h1V311h-1ZM1107 275h3V293h-3ZM1116 273h1V309h-1ZM1115 279h3V295h-3ZM1123 263h1V293h-1ZM1122 268h3V287h-3ZM1127 254h1V272h-1ZM1126 259h3V269h-3ZM1147 327h1V345h-1ZM1146 337h3V345h-3ZM1158 350h1V384h-1ZM1157 356h3V363h-3ZM1177 392h1V419h-1ZM1176 402h3V419h-3ZM1181 384h1V414h-1ZM1180 391h3V403h-3ZM1189 373h1V406h-1ZM1188 375h3V399h-3ZM1193 364h1V378h-1ZM1192 368h3V375h-3ZM1212 361h1V407h-1ZM1211 369h3V407h-3ZM1216 347h1V371h-1ZM1215 353h3V370h-3ZM1231 365h1V395h-1ZM1230 375h3V385h-3ZM1235 361h1V381h-1ZM1234 374h3V376h-3ZM1239 344h1V382h-1ZM1238 358h3V375h-3ZM1247 352h1V384h-1ZM1246 360h3V364h-3ZM1266 392h1V414h-1ZM1265 394h3V406h-3ZM1278 383h1V415h-1ZM1277 392h3V413h-3ZM1282 389h1V395h-1ZM1281 391h3V393h-3ZM1285 385h1V396h-1ZM1284 388h3V392h-3ZM1297 393h1V405h-1ZM1296 396h3V397h-3ZM1305 382h1V403h-1ZM1304 398h3V400h-3ZM1309 393h1V399h-1ZM1308 394h3V399h-3ZM1312 393h1V396h-1ZM1311 393h3V395h-3ZM1320 383h1V402h-1ZM1319 390h3V400h-3ZM1328 386h1V397h-1ZM1327 387h3V397h-3ZM1332 371h1V390h-1ZM1331 378h3V388h-3ZM1336 373h1V383h-1ZM1335 374h3V379h-3ZM1339 365h1V375h-1ZM1338 367h3V375h-3ZM1343 343h1V368h-1ZM1342 350h3V368h-3Z" fill="#2ebd85"/><path d="M79 315h1V342h-1ZM78 323h3V336h-3ZM86 318h1V339h-1ZM85 319h3V329h-3ZM98 321h1V335h-1ZM97 322h3V334h-3ZM102 327h1V339h-1ZM101 333h3V336h-3ZM106 328h1V353h-1ZM105 335h3V336h-3ZM117 308h1V342h-1ZM116 316h3V333h-3ZM125 328h1V339h-1ZM124 329h3V332h-3ZM129 330h1V368h-1ZM128 332h3V368h-3ZM133 359h1V408h-1ZM132 367h3V389h-3ZM137 383h1V436h-1ZM136 388h3V422h-3ZM144 415h1V466h-1ZM143 418h3V421h-3ZM156 345h1V415h-1ZM155 345h3V408h-3ZM167 357h1V395h-1ZM166 374h3V380h-3ZM171 369h1V418h-1ZM170 379h3V403h-3ZM175 401h1V414h-1ZM174 402h3V408h-3ZM179 404h1V453h-1ZM178 407h3V448h-3ZM183 422h1V472h-1ZM182 447h3V464h-3ZM194 421h1V453h-1ZM193 425h3V446h-3ZM206 415h1V438h-1ZM205 421h3V435h-3ZM214 422h1V444h-1ZM213 423h3V434h-3ZM221 397h1V426h-1ZM220 402h3V422h-3ZM225 418h1V429h-1ZM224 421h3V423h-3ZM229 419h1V426h-1ZM228 421h3V425h-3ZM241 389h1V405h-1ZM240 397h3V398h-3ZM244 391h1V407h-1ZM243 398h3V402h-3ZM252 397h1V426h-1ZM251 398h3V421h-3ZM256 419h1V441h-1ZM255 420h3V434h-3ZM260 427h1V441h-1ZM259 433h3V436h-3ZM271 390h1V435h-1ZM270 414h3V435h-3ZM283 421h1V435h-1ZM282 424h3V428h-3ZM287 426h1V474h-1ZM286 427h3V466h-3ZM295 446h1V481h-1ZM294 459h3V481h-3ZM302 432h1V464h-1ZM301 433h3V457h-3ZM314 407h1V430h-1ZM313 414h3V425h-3ZM322 404h1V427h-1ZM321 419h3V427h-3ZM333 415h1V421h-1ZM332 416h3V420h-3ZM364 340h1V349h-1ZM363 344h3V345h-3ZM368 338h1V351h-1ZM367 344h3V351h-3ZM376 338h1V350h-1ZM375 341h3V348h-3ZM379 339h1V357h-1ZM378 345h3V346h-3ZM391 327h1V336h-1ZM390 327h3V336h-3ZM395 331h1V347h-1ZM394 335h3V347h-3ZM414 271h1V286h-1ZM413 279h3V283h-3ZM422 267h1V279h-1ZM421 268h3V274h-3ZM426 260h1V298h-1ZM425 273h3V284h-3ZM433 271h1V284h-1ZM432 273h3V279h-3ZM441 270h1V281h-1ZM440 275h3V278h-3ZM445 275h1V284h-1ZM444 277h3V281h-3ZM453 251h1V289h-1ZM452 256h3V263h-3ZM468 216h1V253h-1ZM467 216h3V250h-3ZM484 224h1V248h-1ZM483 233h3V237h-3ZM487 233h1V253h-1ZM486 236h3V247h-3ZM491 237h1V264h-1ZM490 246h3V263h-3ZM495 257h1V277h-1ZM494 262h3V275h-3ZM511 253h1V266h-1ZM510 260h3V265h-3ZM514 263h1V273h-1ZM513 264h3V270h-3ZM518 268h1V301h-1ZM517 269h3V293h-3ZM541 226h1V244h-1ZM540 227h3V240h-3ZM545 238h1V262h-1ZM544 239h3V262h-3ZM553 257h1V272h-1ZM552 258h3V264h-3ZM564 246h1V279h-1ZM563 253h3V271h-3ZM572 265h1V274h-1ZM571 267h3V270h-3ZM576 255h1V286h-1ZM575 268h3V279h-3ZM580 274h1V297h-1ZM579 279h3V289h-3ZM584 279h1V317h-1ZM583 288h3V297h-3ZM599 242h1V255h-1ZM598 249h3V253h-3ZM615 238h1V251h-1ZM614 241h3V250h-3ZM618 248h1V265h-1ZM617 249h3V262h-3ZM630 231h1V250h-1ZM629 232h3V245h-3ZM642 231h1V248h-1ZM641 235h3V243h-3ZM661 168h1V178h-1ZM660 173h3V174h-3ZM672 155h1V186h-1ZM671 156h3V172h-3ZM684 148h1V178h-1ZM683 161h3V170h-3ZM688 165h1V175h-1ZM687 170h3V171h-3ZM692 163h1V180h-1ZM691 171h3V176h-3ZM703 154h1V175h-1ZM702 155h3V165h-3ZM707 159h1V176h-1ZM706 164h3V167h-3ZM711 166h1V194h-1ZM710 167h3V173h-3ZM723 156h1V174h-1ZM722 159h3V170h-3ZM726 159h1V177h-1ZM725 169h3V170h-3ZM730 163h1V186h-1ZM729 169h3V171h-3ZM734 163h1V188h-1ZM733 170h3V187h-3ZM738 184h1V209h-1ZM737 185h3V205h-3ZM742 199h1V214h-1ZM741 204h3V211h-3ZM753 190h1V209h-1ZM752 191h3V198h-3ZM765 172h1V185h-1ZM764 173h3V180h-3ZM769 170h1V183h-1ZM768 179h3V182h-3ZM777 137h1V169h-1ZM776 160h3V165h-3ZM788 121h1V175h-1ZM787 130h3V168h-3ZM792 160h1V177h-1ZM791 167h3V175h-3ZM804 173h1V194h-1ZM803 174h3V184h-3ZM807 179h1V209h-1ZM806 183h3V209h-3ZM815 193h1V214h-1ZM814 197h3V211h-3ZM823 176h1V194h-1ZM822 177h3V190h-3ZM827 187h1V224h-1ZM826 189h3V204h-3ZM830 201h1V234h-1ZM829 203h3V229h-3ZM838 209h1V228h-1ZM837 215h3V220h-3ZM846 209h1V248h-1ZM845 210h3V242h-3ZM854 233h1V243h-1ZM853 238h3V243h-3ZM869 213h1V234h-1ZM868 215h3V225h-3ZM873 204h1V227h-1ZM872 224h3V225h-3ZM877 219h1V229h-1ZM876 224h3V229h-3ZM888 205h1V223h-1ZM887 213h3V219h-3ZM904 182h1V191h-1ZM903 184h3V185h-3ZM908 183h1V191h-1ZM907 185h3V190h-3ZM919 175h1V194h-1ZM918 178h3V182h-3ZM927 173h1V191h-1ZM926 176h3V188h-3ZM935 186h1V191h-1ZM934 187h3V191h-3ZM938 189h1V216h-1ZM937 190h3V210h-3ZM942 204h1V218h-1ZM941 209h3V215h-3ZM950 202h1V239h-1ZM949 203h3V238h-3ZM958 231h1V236h-1ZM957 232h3V233h-3ZM969 193h1V209h-1ZM968 197h3V200h-3ZM996 116h1V150h-1ZM995 120h3V145h-3ZM1004 126h1V157h-1ZM1003 130h3V143h-3ZM1008 135h1V289h-1ZM1007 142h3V209h-3ZM1012 204h1V232h-1ZM1011 208h3V225h-3ZM1023 189h1V230h-1ZM1022 190h3V207h-3ZM1027 204h1V228h-1ZM1026 206h3V224h-3ZM1031 214h1V248h-1ZM1030 223h3V244h-3ZM1035 235h1V277h-1ZM1034 243h3V257h-3ZM1050 199h1V248h-1ZM1049 225h3V242h-3ZM1054 235h1V254h-1ZM1053 241h3V248h-3ZM1073 181h1V201h-1ZM1072 195h3V200h-3ZM1077 184h1V213h-1ZM1076 198h3V208h-3ZM1081 202h1V235h-1ZM1080 207h3V230h-3ZM1085 218h1V257h-1ZM1084 229h3V243h-3ZM1100 222h1V264h-1ZM1099 223h3V256h-3ZM1104 254h1V312h-1ZM1103 255h3V293h-3ZM1112 272h1V301h-1ZM1111 275h3V295h-3ZM1120 278h1V292h-1ZM1119 279h3V287h-3ZM1131 248h1V284h-1ZM1130 259h3V282h-3ZM1135 264h1V298h-1ZM1134 281h3V292h-3ZM1139 273h1V319h-1ZM1138 291h3V307h-3ZM1143 305h1V348h-1ZM1142 305h3V345h-3ZM1150 329h1V356h-1ZM1149 337h3V348h-3ZM1154 333h1V369h-1ZM1153 347h3V363h-3ZM1162 355h1V389h-1ZM1161 356h3V368h-3ZM1166 356h1V407h-1ZM1165 367h3V404h-3ZM1170 397h1V448h-1ZM1169 403h3V416h-3ZM1174 411h1V427h-1ZM1173 415h3V419h-3ZM1185 389h1V407h-1ZM1184 391h3V399h-3ZM1197 355h1V377h-1ZM1196 368h3V374h-3ZM1201 370h1V376h-1ZM1200 373h3V374h-3ZM1204 363h1V377h-1ZM1203 373h3V376h-3ZM1208 374h1V424h-1ZM1207 376h3V407h-3ZM1220 348h1V365h-1ZM1219 353h3V364h-3ZM1224 358h1V393h-1ZM1223 363h3V384h-3ZM1228 376h1V386h-1ZM1227 383h3V385h-3ZM1243 345h1V367h-1ZM1242 358h3V364h-3ZM1251 358h1V382h-1ZM1250 360h3V377h-3ZM1255 374h1V380h-1ZM1254 376h3V377h-3ZM1258 374h1V396h-1ZM1257 377h3V393h-3ZM1262 378h1V415h-1ZM1261 392h3V406h-3ZM1270 376h1V413h-1ZM1269 394h3V407h-3ZM1274 382h1V420h-1ZM1273 406h3V414h-3ZM1289 374h1V394h-1ZM1288 388h3V389h-3ZM1293 386h1V404h-1ZM1292 389h3V397h-3ZM1301 389h1V401h-1ZM1300 396h3V400h-3ZM1316 375h1V402h-1ZM1315 394h3V400h-3ZM1324 384h1V399h-1ZM1323 390h3V397h-3ZM1347 345h1V369h-1ZM1346 350h3V351h-3ZM1351 350h1V373h-1ZM1350 350h3V369h-3ZM1355 366h1V383h-1ZM1354 368h3V371h-3ZM1359 363h1V381h-1ZM1358 370h3V375h-3ZM1363 372h1V375h-1ZM1362 374h3V375h-3Z" fill="#f6465d"/></g>
<g fill="#181a20"><rect x="76" y="70" width="842" height="27" opacity="0.55"/><rect x="76" y="101" width="190" height="27" opacity="0.8"/><rect x="76" y="132" width="200" height="27" opacity="0.8"/><rect x="76" y="164" width="200" height="27" opacity="0.8"/></g>
<path d="M70 374.5H1403" stroke="#f6465d" stroke-width="1" stroke-dasharray="1 2" shape-rendering="crispEdges"/>
<path d="M70 533.5H1506M70 556.5H1506M70 593.5H1506" stroke="#36383d" stroke-width="1" shape-rendering="crispEdges"/>
<path d="M1403.5 61V593" stroke="#333b47" stroke-width="1" fill="none" shape-rendering="crispEdges"/>
<g clip-path="url(#cv)" opacity="0.5"><path d="M70 556h2v-7.8h-2ZM74 556h2v-8.2h-2ZM82 556h2v-9.6h-2ZM89 556h2v-7.8h-2ZM93 556h2v-4.1h-2ZM109 556h2v-6.0h-2ZM112 556h2v-6.7h-2ZM120 556h2v-5.7h-2ZM139 556h2v-11.2h-2ZM147 556h2v-8.8h-2ZM151 556h2v-19.5h-2ZM159 556h2v-16.0h-2ZM163 556h2v-10.9h-2ZM186 556h2v-15.5h-2ZM190 556h2v-9.9h-2ZM197 556h2v-10.8h-2ZM201 556h2v-4.5h-2ZM209 556h2v-7.9h-2ZM217 556h2v-11.0h-2ZM232 556h2v-8.1h-2ZM236 556h2v-9.3h-2ZM247 556h2v-6.9h-2ZM263 556h2v-8.4h-2ZM267 556h2v-8.6h-2ZM274 556h2v-8.6h-2ZM278 556h2v-8.3h-2ZM290 556h2v-15.1h-2ZM297 556h2v-18.5h-2ZM305 556h2v-12.3h-2ZM309 556h2v-8.9h-2ZM317 556h2v-7.2h-2ZM324 556h2v-6.0h-2ZM328 556h2v-5.4h-2ZM336 556h2v-4.6h-2ZM340 556h2v-3.8h-2ZM344 556h2v-6.9h-2ZM348 556h2v-10.2h-2ZM351 556h2v-6.6h-2ZM355 556h2v-6.0h-2ZM359 556h2v-5.8h-2ZM371 556h2v-5.3h-2ZM382 556h2v-6.0h-2ZM386 556h2v-4.1h-2ZM398 556h2v-4.3h-2ZM402 556h2v-6.6h-2ZM405 556h2v-5.4h-2ZM409 556h2v-9.8h-2ZM417 556h2v-5.4h-2ZM429 556h2v-7.2h-2ZM436 556h2v-5.9h-2ZM448 556h2v-7.6h-2ZM456 556h2v-5.8h-2ZM459 556h2v-7.6h-2ZM463 556h2v-5.6h-2ZM471 556h2v-5.8h-2ZM475 556h2v-5.5h-2ZM479 556h2v-4.0h-2ZM498 556h2v-5.3h-2ZM502 556h2v-5.3h-2ZM506 556h2v-5.7h-2ZM521 556h2v-7.9h-2ZM525 556h2v-5.6h-2ZM529 556h2v-5.4h-2ZM533 556h2v-8.2h-2ZM536 556h2v-5.3h-2ZM548 556h2v-6.1h-2ZM556 556h2v-4.2h-2ZM560 556h2v-6.8h-2ZM567 556h2v-4.7h-2ZM587 556h2v-9.1h-2ZM590 556h2v-5.2h-2ZM594 556h2v-5.6h-2ZM602 556h2v-4.0h-2ZM606 556h2v-3.5h-2ZM610 556h2v-4.3h-2ZM621 556h2v-8.6h-2ZM625 556h2v-5.0h-2ZM633 556h2v-3.0h-2ZM637 556h2v-4.4h-2ZM644 556h2v-4.5h-2ZM648 556h2v-7.4h-2ZM652 556h2v-8.9h-2ZM656 556h2v-6.1h-2ZM664 556h2v-5.5h-2ZM668 556h2v-7.0h-2ZM675 556h2v-5.5h-2ZM679 556h2v-6.6h-2ZM695 556h2v-5.9h-2ZM698 556h2v-7.1h-2ZM714 556h2v-4.5h-2ZM718 556h2v-4.9h-2ZM745 556h2v-6.5h-2ZM749 556h2v-4.5h-2ZM756 556h2v-5.3h-2ZM760 556h2v-5.9h-2ZM772 556h2v-5.9h-2ZM779 556h2v-5.8h-2ZM783 556h2v-7.9h-2ZM795 556h2v-4.3h-2ZM799 556h2v-4.2h-2ZM810 556h2v-4.9h-2ZM818 556h2v-9.1h-2ZM833 556h2v-7.2h-2ZM841 556h2v-5.3h-2ZM849 556h2v-5.3h-2ZM856 556h2v-6.1h-2ZM860 556h2v-6.4h-2ZM864 556h2v-4.6h-2ZM880 556h2v-5.3h-2ZM883 556h2v-5.2h-2ZM891 556h2v-7.2h-2ZM895 556h2v-5.6h-2ZM899 556h2v-4.6h-2ZM910 556h2v-5.9h-2ZM914 556h2v-5.9h-2ZM922 556h2v-5.4h-2ZM930 556h2v-4.0h-2ZM945 556h2v-5.3h-2ZM953 556h2v-4.9h-2ZM961 556h2v-6.9h-2ZM964 556h2v-6.3h-2ZM972 556h2v-8.5h-2ZM976 556h2v-5.4h-2ZM980 556h2v-7.6h-2ZM984 556h2v-3.9h-2ZM988 556h2v-6.5h-2ZM991 556h2v-6.5h-2ZM999 556h2v-6.3h-2ZM1015 556h2v-9.4h-2ZM1018 556h2v-5.6h-2ZM1038 556h2v-4.3h-2ZM1042 556h2v-6.6h-2ZM1045 556h2v-6.8h-2ZM1057 556h2v-6.4h-2ZM1061 556h2v-6.0h-2ZM1065 556h2v-3.6h-2ZM1069 556h2v-7.4h-2ZM1088 556h2v-6.3h-2ZM1092 556h2v-4.6h-2ZM1096 556h2v-4.2h-2ZM1107 556h2v-8.4h-2ZM1115 556h2v-8.0h-2ZM1122 556h2v-7.5h-2ZM1126 556h2v-6.2h-2ZM1146 556h2v-5.9h-2ZM1157 556h2v-7.7h-2ZM1176 556h2v-6.5h-2ZM1180 556h2v-7.3h-2ZM1188 556h2v-8.1h-2ZM1192 556h2v-4.4h-2ZM1211 556h2v-8.8h-2ZM1215 556h2v-6.6h-2ZM1230 556h2v-7.5h-2ZM1234 556h2v-6.1h-2ZM1238 556h2v-7.8h-2ZM1246 556h2v-8.2h-2ZM1265 556h2v-6.8h-2ZM1277 556h2v-7.4h-2ZM1281 556h2v-3.7h-2ZM1284 556h2v-4.3h-2ZM1296 556h2v-5.0h-2ZM1304 556h2v-6.0h-2ZM1308 556h2v-3.7h-2ZM1311 556h2v-2.7h-2ZM1319 556h2v-5.8h-2ZM1327 556h2v-3.9h-2ZM1331 556h2v-6.4h-2ZM1335 556h2v-4.7h-2ZM1338 556h2v-5.0h-2ZM1342 556h2v-6.0h-2Z" fill="#2ebd85"/><path d="M78 556h2v-9.8h-2ZM85 556h2v-8.3h-2ZM97 556h2v-6.6h-2ZM101 556h2v-5.5h-2ZM105 556h2v-9.3h-2ZM116 556h2v-11.2h-2ZM124 556h2v-5.1h-2ZM128 556h2v-11.9h-2ZM132 556h2v-14.9h-2ZM136 556h2v-16.3h-2ZM143 556h2v-15.1h-2ZM155 556h2v-19.7h-2ZM166 556h2v-11.8h-2ZM170 556h2v-14.5h-2ZM174 556h2v-6.8h-2ZM178 556h2v-14.2h-2ZM182 556h2v-15.0h-2ZM193 556h2v-10.9h-2ZM205 556h2v-8.4h-2ZM213 556h2v-8.3h-2ZM220 556h2v-10.3h-2ZM224 556h2v-5.8h-2ZM228 556h2v-4.4h-2ZM240 556h2v-6.8h-2ZM243 556h2v-7.2h-2ZM251 556h2v-10.7h-2ZM255 556h2v-8.9h-2ZM259 556h2v-6.3h-2ZM270 556h2v-13.7h-2ZM282 556h2v-6.5h-2ZM286 556h2v-13.8h-2ZM294 556h2v-12.1h-2ZM301 556h2v-11.4h-2ZM313 556h2v-8.9h-2ZM321 556h2v-6.3h-2ZM332 556h2v-3.7h-2ZM363 556h2v-4.0h-2ZM367 556h2v-5.2h-2ZM375 556h2v-4.6h-2ZM378 556h2v-5.1h-2ZM390 556h2v-4.7h-2ZM394 556h2v-4.8h-2ZM413 556h2v-5.0h-2ZM421 556h2v-5.3h-2ZM425 556h2v-8.8h-2ZM432 556h2v-4.5h-2ZM440 556h2v-4.3h-2ZM444 556h2v-4.7h-2ZM452 556h2v-7.8h-2ZM467 556h2v-8.2h-2ZM483 556h2v-6.4h-2ZM486 556h2v-5.6h-2ZM490 556h2v-7.0h-2ZM494 556h2v-6.4h-2ZM510 556h2v-5.1h-2ZM513 556h2v-3.7h-2ZM517 556h2v-8.2h-2ZM540 556h2v-5.1h-2ZM544 556h2v-6.7h-2ZM552 556h2v-4.5h-2ZM563 556h2v-7.5h-2ZM571 556h2v-3.5h-2ZM575 556h2v-6.9h-2ZM579 556h2v-5.8h-2ZM583 556h2v-8.2h-2ZM598 556h2v-4.3h-2ZM614 556h2v-4.3h-2ZM617 556h2v-6.0h-2ZM629 556h2v-5.7h-2ZM641 556h2v-5.2h-2ZM660 556h2v-5.0h-2ZM671 556h2v-7.4h-2ZM683 556h2v-7.9h-2ZM687 556h2v-4.9h-2ZM691 556h2v-5.7h-2ZM702 556h2v-5.5h-2ZM706 556h2v-5.8h-2ZM710 556h2v-7.0h-2ZM722 556h2v-5.2h-2ZM725 556h2v-6.0h-2ZM729 556h2v-7.0h-2ZM733 556h2v-7.0h-2ZM737 556h2v-7.0h-2ZM741 556h2v-5.5h-2ZM752 556h2v-5.7h-2ZM764 556h2v-4.2h-2ZM768 556h2v-4.5h-2ZM776 556h2v-7.8h-2ZM787 556h2v-11.1h-2ZM791 556h2v-6.1h-2ZM803 556h2v-5.6h-2ZM806 556h2v-6.9h-2ZM814 556h2v-5.6h-2ZM822 556h2v-6.1h-2ZM826 556h2v-8.6h-2ZM829 556h2v-7.5h-2ZM837 556h2v-6.1h-2ZM845 556h2v-8.7h-2ZM853 556h2v-4.8h-2ZM868 556h2v-6.4h-2ZM872 556h2v-6.1h-2ZM876 556h2v-4.8h-2ZM887 556h2v-5.4h-2ZM903 556h2v-3.7h-2ZM907 556h2v-3.6h-2ZM918 556h2v-5.2h-2ZM926 556h2v-6.2h-2ZM934 556h2v-3.5h-2ZM937 556h2v-6.8h-2ZM941 556h2v-4.4h-2ZM949 556h2v-8.9h-2ZM957 556h2v-3.7h-2ZM968 556h2v-5.9h-2ZM995 556h2v-7.5h-2ZM1003 556h2v-6.9h-2ZM1007 556h2v-15.0h-2ZM1011 556h2v-6.8h-2ZM1022 556h2v-9.2h-2ZM1026 556h2v-6.2h-2ZM1030 556h2v-8.4h-2ZM1034 556h2v-8.8h-2ZM1049 556h2v-9.6h-2ZM1053 556h2v-5.2h-2ZM1072 556h2v-6.1h-2ZM1076 556h2v-7.2h-2ZM1080 556h2v-7.4h-2ZM1084 556h2v-8.5h-2ZM1099 556h2v-9.0h-2ZM1103 556h2v-10.5h-2ZM1111 556h2v-7.5h-2ZM1119 556h2v-5.1h-2ZM1130 556h2v-8.0h-2ZM1134 556h2v-8.0h-2ZM1138 556h2v-9.3h-2ZM1142 556h2v-9.0h-2ZM1149 556h2v-6.7h-2ZM1153 556h2v-8.1h-2ZM1161 556h2v-8.4h-2ZM1165 556h2v-10.3h-2ZM1169 556h2v-10.5h-2ZM1173 556h2v-5.8h-2ZM1184 556h2v-6.1h-2ZM1196 556h2v-5.6h-2ZM1200 556h2v-3.8h-2ZM1203 556h2v-4.4h-2ZM1207 556h2v-9.4h-2ZM1219 556h2v-5.8h-2ZM1223 556h2v-8.4h-2ZM1227 556h2v-3.9h-2ZM1242 556h2v-6.6h-2ZM1250 556h2v-6.1h-2ZM1254 556h2v-4.3h-2ZM1257 556h2v-5.9h-2ZM1261 556h2v-8.2h-2ZM1269 556h2v-8.7h-2ZM1273 556h2v-7.8h-2ZM1288 556h2v-5.4h-2ZM1292 556h2v-5.3h-2ZM1300 556h2v-4.0h-2ZM1315 556h2v-6.7h-2ZM1323 556h2v-5.1h-2ZM1346 556h2v-6.0h-2ZM1350 556h2v-5.6h-2ZM1354 556h2v-5.8h-2ZM1358 556h2v-5.3h-2ZM1362 556h2v-2.7h-2Z" fill="#f6465d"/></g>
<g clip-path="url(#cv)"><circle cx="107.5" cy="512.8" r="26.8" fill="#0f1115" stroke="#3a3d45" stroke-width="1"/><rect x="78" y="538" width="128" height="20" fill="#181a20" opacity="0.62"/><text x="82" y="561" font-family="Liberation Sans, sans-serif" font-size="16" fill="#848e9c">Volume</text><text x="148.5" y="561" font-family="Liberation Sans, sans-serif" font-size="16" fill="#f6465d">2.016K</text></g>
<text x="1414" y="531.9" font-family="Liberation Sans, sans-serif" font-size="15" fill="#848e9c" textLength="70" lengthAdjust="spacingAndGlyphs">70,000.00</text>
<text x="1414" y="456.9" font-family="Liberation Sans, sans-serif" font-size="15" fill="#848e9c" textLength="70" lengthAdjust="spacingAndGlyphs">80,000.00</text>
<text x="1414" y="307.9" font-family="Liberation Sans, sans-serif" font-size="15" fill="#848e9c" textLength="78" lengthAdjust="spacingAndGlyphs">100,000.00</text>
<text x="1414" y="232.9" font-family="Liberation Sans, sans-serif" font-size="15" fill="#848e9c" textLength="78" lengthAdjust="spacingAndGlyphs">110,000.00</text>
<text x="1414" y="157.9" font-family="Liberation Sans, sans-serif" font-size="15" fill="#848e9c" textLength="78" lengthAdjust="spacingAndGlyphs">120,000.00</text>
<text x="1414" y="83.9" font-family="Liberation Sans, sans-serif" font-size="15" fill="#848e9c" textLength="78" lengthAdjust="spacingAndGlyphs">130,000.00</text>
<path d="M1404 363h84a2 2 0 0 1 2 2v19a2 2 0 0 1-2 2h-84z" fill="#f6465d"/>
<text x="1414" y="379.3" font-family="Liberation Serif, serif" font-weight="bold" font-size="16.5" fill="#fff" textLength="69" lengthAdjust="spacingAndGlyphs">90,638.63</text>
<g clip-path="url(#ca)"><path d="M1404 543h63a2 2 0 0 1 2 2v22h-65z" fill="#f6465d"/><text x="1414" y="560.6" font-family="Liberation Sans, sans-serif" font-weight="bold" font-size="16" fill="#fff" textLength="48" lengthAdjust="spacingAndGlyphs">2.016K</text></g>
<text x="147.9" y="580" text-anchor="middle" font-family="Liberation Sans, sans-serif" font-size="15.2" fill="#848e9c">Mar</text>
<text x="267.4" y="580" text-anchor="middle" font-family="Liberation Sans, sans-serif" font-size="15.2" fill="#848e9c">Apr</text>
<text x="383.1" y="580" text-anchor="middle" font-family="Liberation Sans, sans-serif" font-size="15.2" fill="#848e9c">May</text>
<text x="502.6" y="580" text-anchor="middle" font-family="Liberation Sans, sans-serif" font-size="15.2" fill="#848e9c">Jun</text>
<text x="618.3" y="580" text-anchor="middle" font-family="Liberation Sans, sans-serif" font-size="15.2" fill="#848e9c">Jul</text>
<text x="737.8" y="580" text-anchor="middle" font-family="Liberation Sans, sans-serif" font-size="15.2" fill="#848e9c">Aug</text>
<text x="857.3" y="580" text-anchor="middle" font-family="Liberation Sans, sans-serif" font-size="15.2" fill="#848e9c">Sep</text>
<text x="972.9" y="580" text-anchor="middle" font-family="Liberation Sans, sans-serif" font-size="15.2" fill="#848e9c">Oct</text>
<text x="1092.5" y="580" text-anchor="middle" font-family="Liberation Sans, sans-serif" font-size="15.2" fill="#848e9c">Nov</text>
<text x="1208.1" y="580" text-anchor="middle" font-family="Liberation Sans, sans-serif" font-size="15.2" fill="#848e9c">Dec</text>
<text x="1327.6" y="580" text-anchor="middle" font-family="Liberation Sans, sans-serif" font-size="16.3" fill="#848e9c" font-weight="bold">2026</text>
<g transform="translate(1455 574.5)" fill="none" stroke="#d1d4dc" stroke-width="1.25"><path d="M-9.5 0L-4.8 -8.2H4.8L9.5 0L4.8 8.2H-4.8Z"/><circle r="2.8"/></g>
</svg>
<div style="position:absolute;left:57px;top:532px;width:11px;height:35px;border-radius:6px;background:#181a20;border:1px solid #2a2c33"></div>
<svg class="i" style="left:57px;top:532px" width="11" height="35" fill="none" stroke="#d1d4dc" stroke-width="1.2"><path d="M7 13.5L4.3 17.5L7 21.5"/></svg>
<span class="t" style="letter-spacing:-0.16px;font-size:20px;color:#868e9b;font-weight:400;top:70.5px;height:24.0px;line-height:24.0px;left:81px;-webkit-text-stroke:0.2px;">BTCUSDT Latest Data · 1D · Binance</span>
<span class="t" style="letter-spacing:-2.84px;font-size:16.5px;color:#868e9b;font-weight:400;top:72.6px;height:19.8px;line-height:19.8px;left:422px;">O</span>
<span class="t" style="letter-spacing:0.32px;font-size:16.5px;color:#f6465d;font-weight:400;top:72.6px;height:19.8px;line-height:19.8px;left:434px;-webkit-text-stroke:0.25px;">90,641.27</span>
<span class="t" style="letter-spacing:-1.92px;font-size:16.5px;color:#868e9b;font-weight:400;top:72.6px;height:19.8px;line-height:19.8px;left:519px;">H</span>
<span class="t" style="letter-spacing:0.32px;font-size:16.5px;color:#f6465d;font-weight:400;top:72.6px;height:19.8px;line-height:19.8px;left:531px;-webkit-text-stroke:0.25px;">90,832.00</span>
<span class="t" style="letter-spacing:-1.19px;font-size:16.5px;color:#868e9b;font-weight:400;top:72.6px;height:19.8px;line-height:19.8px;left:615px;">L</span>
<span class="t" style="letter-spacing:0.32px;font-size:16.5px;color:#f6465d;font-weight:400;top:72.6px;height:19.8px;line-height:19.8px;left:624px;-webkit-text-stroke:0.25px;">90,408.23</span>
<span class="t" style="letter-spacing:-1.92px;font-size:16.5px;color:#868e9b;font-weight:400;top:72.6px;height:19.8px;line-height:19.8px;left:708px;">C</span>
<span class="t" style="letter-spacing:0.32px;font-size:16.5px;color:#f6465d;font-weight:400;top:72.6px;height:19.8px;line-height:19.8px;left:720px;-webkit-text-stroke:0.25px;">90,638.63</span>
<span class="t" style="letter-spacing:-0.09px;font-size:16.5px;color:#f6465d;font-weight:400;top:72.6px;height:19.8px;line-height:19.8px;left:803.5px;-webkit-text-stroke:0.25px;">-2.64 (−0.00%)</span>
<span class="t" style="letter-spacing:0.22px;font-size:16px;color:#868e9b;font-weight:400;top:104.9px;height:19.2px;line-height:19.2px;left:81px;-webkit-text-stroke:0.15px;">MA 7 close 0</span>
<span class="t" style="letter-spacing:0.48px;font-size:16px;color:#f0a33a;font-weight:400;top:104.9px;height:19.2px;line-height:19.2px;left:185px;-webkit-text-stroke:0.35px;">91,840.21</span>
<span class="t" style="letter-spacing:0.21px;font-size:16px;color:#868e9b;font-weight:400;top:135.9px;height:19.2px;line-height:19.2px;left:81px;-webkit-text-stroke:0.15px;">MA 25 close 0</span>
<span class="t" style="letter-spacing:0.48px;font-size:16px;color:#e040f0;font-weight:400;top:135.9px;height:19.2px;line-height:19.2px;left:194px;-webkit-text-stroke:0.35px;">89,073.26</span>
<span class="t" style="letter-spacing:0.21px;font-size:16px;color:#868e9b;font-weight:400;top:167.9px;height:19.2px;line-height:19.2px;left:81px;-webkit-text-stroke:0.15px;">MA 99 close 0</span>
<span class="t" style="letter-spacing:0.48px;font-size:16px;color:#6ff2f5;font-weight:400;top:167.9px;height:19.2px;line-height:19.2px;left:194px;-webkit-text-stroke:0.35px;">98,300.52</span>
<div style="position:absolute;left:80px;top:197px;width:38px;height:27px;border:1px solid #3c414d;border-radius:4px"></div>
<svg class="i" style="left:80px;top:197px" width="38" height="27" fill="none" stroke="#d1d4dc" stroke-width="1.5"><path d="M13.7 15.8L18.7 10.8L23.7 15.8"/></svg>
<svg class="i" style="left:90px;top:600px" width="32" height="36" fill="none" stroke="#d1d4dc" stroke-width="1.3"><path d="M8.7 6.3v5.6M19.3 6.3v5.6M3.9 18.5V12.3a2.6 2.6 0 0 1 2.6-2.6H24.3a2.6 2.6 0 0 1 2.6 2.6V27a2.6 2.6 0 0 1-2.6 2.6H14M3.9 15H26.9M2.3 25.5h10M8.7 21.3l4.2 4.2-4.2 4.2"/></svg>
<span class="t" style="letter-spacing:0.08px;font-size:17.5px;color:#d1d4dc;font-weight:400;top:609.0px;height:21.0px;line-height:21.0px;left:1223px;-webkit-text-stroke:0.2px;">17:17:47 UTC+2</span>
<div class="vl" style="left:1367px;top:605px;height:28px;background:#434651"></div>
<span class="t" style="letter-spacing:-0.02px;font-size:18px;color:#d1d4dc;font-weight:400;top:608.7px;height:21.6px;line-height:21.6px;left:1382px;">%</span>
<span class="t" style="letter-spacing:0.82px;font-size:17.5px;color:#d1d4dc;font-weight:400;top:609.0px;height:21.0px;line-height:21.0px;left:1415px;-webkit-text-stroke:0.2px;">log</span>
<span class="t" style="letter-spacing:1.31px;font-size:17.5px;color:#d1d4dc;font-weight:400;top:609.0px;height:21.0px;line-height:21.0px;left:1455px;-webkit-text-stroke:0.2px;">auto</span>
</div>
<div id="lower">
<span class="t" style="letter-spacing:0.41px;font-size:17px;color:#eaecef;font-weight:700;top:22.3px;height:20.4px;line-height:20.4px;left:17px;">Spot</span>
<span class="t" style="letter-spacing:0.65px;font-size:17px;color:#848e9c;font-weight:400;top:22.3px;height:20.4px;line-height:20.4px;left:87px;-webkit-text-stroke:0.3px;">Cross</span>
<span class="t" style="letter-spacing:0.78px;font-size:17px;color:#848e9c;font-weight:400;top:22.3px;height:20.4px;line-height:20.4px;left:165px;-webkit-text-stroke:0.3px;">Isolated</span>
<span class="t" style="letter-spacing:0.96px;font-size:17px;color:#848e9c;font-weight:400;top:22.3px;height:20.4px;line-height:20.4px;left:262px;-webkit-text-stroke:0.3px;">Grid</span>
<div style="position:absolute;left:26px;top:51px;width:21px;height:4px;background:#fcd535"></div>
<div class="hl" style="left:0;top:54px;width:1507px"></div>
<svg class="i" style="left:1390px;top:18px" width="20" height="20" fill="none" stroke="#848e9c" stroke-width="1.5"><path d="M15.5 2.5L3.5 16.5"/><circle cx="5" cy="5" r="2.6"/><circle cx="14" cy="14" r="2.6"/></svg>
<span class="t" style="letter-spacing:0.14px;font-size:15px;color:#eaecef;font-weight:400;top:19.5px;height:18.0px;line-height:18.0px;left:1418px;-webkit-text-stroke:0.45px #eaecef;">Fee Level</span>
<span class="t" style="letter-spacing:1.02px;font-size:17px;color:#848e9c;font-weight:400;top:76.3px;height:20.4px;line-height:20.4px;left:17px;-webkit-text-stroke:0.3px;">Limit</span>
<span class="t" style="letter-spacing:0.44px;font-size:17px;color:#eaecef;font-weight:700;top:76.3px;height:20.4px;line-height:20.4px;left:78px;">Market</span>
<span class="t" style="letter-spacing:0.60px;font-size:17px;color:#848e9c;font-weight:400;top:76.3px;height:20.4px;line-height:20.4px;left:156px;-webkit-text-stroke:0.3px;">Stop Limit</span>
<svg class="i" style="left:243px;top:80px" width="12" height="8"><path d="M0.5 1h9.5l-4.75 5.5z" fill="#848e9c"/></svg>
<svg class="i" style="left:280px;top:74px" width="20" height="20" fill="none" stroke="#848e9c" stroke-width="1.4"><circle cx="10" cy="10" r="8.3"/><path d="M10 8.6v5.4M10 5.4v1.6"/></svg>
<svg class="i" style="left:1250px;top:73px" width="24" height="22" fill="none" stroke="#707a8a" stroke-width="1.7"><circle cx="11.7" cy="10.4" r="4.9"/><circle cx="11.7" cy="10.4" r="1.7" fill="#707a8a" stroke="none"/><path d="M3.4 8.9A8.4 8.4 0 0 1 18.6 5.6M19.4 1.4V5.9H14.8M20.0 11.9A8.4 8.4 0 0 1 4.8 15.2M4.0 19.4V14.9H8.6"/></svg>
<span class="t" style="letter-spacing:0.25px;font-size:15px;color:#707a8a;font-weight:400;top:76.0px;height:18.0px;line-height:18.0px;left:1276px;-webkit-text-stroke:0.3px;">Recurring</span>
<svg class="i" style="left:1364px;top:73px" width="22" height="22" fill="none" stroke="#707a8a" stroke-width="1.7"><rect x="1.9" y="7.8" width="17.3" height="11.4" rx="1.6"/><path d="M6.5 7.6a3.9 3.9 0 0 1 7.8 0M14.6 11.3h4.6v4.4h-4.6z"/><circle cx="10.4" cy="5.2" r="0.9" fill="#707a8a" stroke="none"/></svg>
<span class="t" style="letter-spacing:0.32px;font-size:15px;color:#707a8a;font-weight:400;top:75.0px;height:18.0px;line-height:18.0px;left:1389px;-webkit-text-stroke:0.3px;">Buy with USD</span>
<div class="inp dis" style="left:18px;top:111px"></div>
<span class="t" style="letter-spacing:0.57px;font-size:17px;color:#707a8a;font-weight:400;top:130.3px;height:20.4px;line-height:20.4px;left:29px;-webkit-text-stroke:0.3px;">Price</span>
<span class="t" style="letter-spacing:0.85px;font-size:16.5px;color:#4f5867;font-weight:400;top:129.6px;height:19.8px;line-height:19.8px;left:622px;-webkit-text-stroke:0.3px;">Market Price</span>
<div class="inp brd" style="left:18px;top:174px"></div>
<span class="t" style="letter-spacing:0.77px;font-size:17px;color:#707a8a;font-weight:400;top:193.3px;height:20.4px;line-height:20.4px;left:29px;-webkit-text-stroke:0.3px;">Total</span>
<span class="t" style="letter-spacing:0.86px;font-size:17px;color:#707a8a;font-weight:400;top:193.3px;height:20.4px;line-height:20.4px;left:552px;-webkit-text-stroke:0.3px;">Minimum 5</span>
<span class="t" style="letter-spacing:0.24px;font-size:17px;color:#eaecef;font-weight:700;top:193.3px;height:20.4px;line-height:20.4px;left:653px;">USDT</span>
<svg class="i" style="left:709px;top:197px" width="12" height="8"><path d="M0 0.5h10l-5 6z" fill="#848e9c"/></svg>
<div class="hl" style="left:25px;top:251px;width:712px;height:2px;background:#404957"></div>
<svg class="i" style="left:18px;top:0" width="730" height="270"><path d="M182.5 252l4.5-4.5 4.5 4.5-4.5 4.5z" fill="#181a20" stroke="#434c5a" stroke-width="1.2"/><path d="M359.5 252l4.5-4.5 4.5 4.5-4.5 4.5z" fill="#181a20" stroke="#434c5a" stroke-width="1.2"/><path d="M536.5 252l4.5-4.5 4.5 4.5-4.5 4.5z" fill="#181a20" stroke="#434c5a" stroke-width="1.2"/><path d="M713.5 252l4.5-4.5 4.5 4.5-4.5 4.5z" fill="#181a20" stroke="#434c5a" stroke-width="1.2"/><path d="M-2 252l8.5-8.5 8.5 8.5-8.5 8.5z" fill="#181a20" stroke="#eaecef" stroke-width="1.6"/></svg>
<div class="cb" style="left:21px"></div>
<span class="t" style="letter-spacing:0.33px;font-size:15px;color:#eaecef;font-weight:400;top:284.0px;height:18.0px;line-height:18.0px;left:48px;-webkit-text-stroke:0.3px;">Slippage Tolerance</span>
<span class="t" style="letter-spacing:0.36px;font-size:15px;color:#707a8a;font-weight:400;top:320.5px;height:18.0px;line-height:18.0px;left:17.5px;-webkit-text-stroke:0.3px;">Avbl</span>
<svg class="i" style="left:51px;top:326px" width="10" height="7"><path d="M0 0.5h8l-4 5z" fill="#707a8a"/></svg>
<span class="t" style="letter-spacing:0.41px;font-size:15px;color:#eaecef;font-weight:400;top:320.5px;height:18.0px;line-height:18.0px;left:585px;-webkit-text-stroke:0.3px;">0.00840318 USDT</span>
<span class="t" style="letter-spacing:0.27px;font-size:15px;color:#707a8a;font-weight:400;top:349.0px;height:18.0px;line-height:18.0px;left:17px;-webkit-text-stroke:0.3px;border-bottom:1px dotted #707a8a;height:16px;">Max Buy</span>
<span class="t" style="letter-spacing:0.36px;font-size:15px;color:#eaecef;font-weight:400;top:349.0px;height:18.0px;line-height:18.0px;left:649px;-webkit-text-stroke:0.3px;">0.00000 BTC</span>
<span class="t" style="letter-spacing:0.02px;font-size:15px;color:#707a8a;font-weight:400;top:375.0px;height:18.0px;line-height:18.0px;left:17.5px;-webkit-text-stroke:0.3px;border-bottom:1px dotted #707a8a;height:16px;">Est. Fee</span>
<svg class="i" style="left:722px;top:318px" width="18" height="18"><circle cx="9" cy="9" r="8.3" fill="#f0b90b"/><path d="M5 9h8M9 5v8" stroke="#181a20" stroke-width="1.7"/></svg>
<div class="btn" style="left:18px;background:#2ebd85">Buy BTC</div>
<div class="inp dis" style="left:762px;top:111px"></div>
<span class="t" style="letter-spacing:0.57px;font-size:17px;color:#707a8a;font-weight:400;top:130.3px;height:20.4px;line-height:20.4px;left:773px;-webkit-text-stroke:0.3px;">Price</span>
<span class="t" style="letter-spacing:0.85px;font-size:16.5px;color:#4f5867;font-weight:400;top:129.6px;height:19.8px;line-height:19.8px;left:1366px;-webkit-text-stroke:0.3px;">Market Price</span>
<div class="inp brd" style="left:762px;top:174px"></div>
<span class="t" style="letter-spacing:1.28px;font-size:17px;color:#707a8a;font-weight:400;top:193.3px;height:20.4px;line-height:20.4px;left:773px;-webkit-text-stroke:0.3px;">Amount</span>
<span class="t" style="letter-spacing:0.02px;font-size:17px;color:#eaecef;font-weight:700;top:193.3px;height:20.4px;line-height:20.4px;left:1410px;">BTC</span>
<svg class="i" style="left:1452px;top:197px" width="12" height="8"><path d="M0 0.5h10l-5 6z" fill="#848e9c"/></svg>
<div class="hl" style="left:769px;top:251px;width:712px;height:2px;background:#404957"></div>
<svg class="i" style="left:762px;top:0" width="730" height="270"><path d="M182.5 252l4.5-4.5 4.5 4.5-4.5 4.5z" fill="#181a20" stroke="#434c5a" stroke-width="1.2"/><path d="M359.5 252l4.5-4.5 4.5 4.5-4.5 4.5z" fill="#181a20" stroke="#434c5a" stroke-width="1.2"/><path d="M536.5 252l4.5-4.5 4.5 4.5-4.5 4.5z" fill="#181a20" stroke="#434c5a" stroke-width="1.2"/><path d="M713.5 252l4.5-4.5 4.5 4.5-4.5 4.5z" fill="#181a20" stroke="#434c5a" stroke-width="1.2"/><path d="M-2 252l8.5-8.5 8.5 8.5-8.5 8.5z" fill="#181a20" stroke="#eaecef" stroke-width="1.6"/></svg>
<div class="cb" style="left:765px"></div>
<span class="t" style="letter-spacing:0.33px;font-size:15px;color:#eaecef;font-weight:400;top:284.0px;height:18.0px;line-height:18.0px;left:792px;-webkit-text-stroke:0.3px;">Slippage Tolerance</span>
<span class="t" style="letter-spacing:0.36px;font-size:15px;color:#707a8a;font-weight:400;top:320.5px;height:18.0px;line-height:18.0px;left:762px;-webkit-text-stroke:0.3px;">Avbl</span>
<svg class="i" style="left:795px;top:326px" width="10" height="7"><path d="M0 0.5h8l-4 5z" fill="#707a8a"/></svg>
<span class="t" style="letter-spacing:0.35px;font-size:15px;color:#eaecef;font-weight:400;top:320.5px;height:18.0px;line-height:18.0px;left:1341px;-webkit-text-stroke:0.3px;">0.00000000 BTC</span>
<span class="t" style="letter-spacing:0.07px;font-size:15px;color:#707a8a;font-weight:400;top:349.0px;height:18.0px;line-height:18.0px;left:762px;-webkit-text-stroke:0.3px;border-bottom:1px dotted #707a8a;height:16px;">Max Sell</span>
<span class="t" style="letter-spacing:-0.07px;font-size:15px;color:#eaecef;font-weight:400;top:349.0px;height:18.0px;line-height:18.0px;left:1432px;-webkit-text-stroke:0.3px;">0 USDT</span>
<span class="t" style="letter-spacing:0.02px;font-size:15px;color:#707a8a;font-weight:400;top:375.0px;height:18.0px;line-height:18.0px;left:762px;-webkit-text-stroke:0.3px;border-bottom:1px dotted #707a8a;height:16px;">Est. Fee</span>
<svg class="i" style="left:1466px;top:318px" width="18" height="18"><circle cx="9" cy="9" r="8.3" fill="#f0b90b"/><path d="M5 9h8M9 5v8" stroke="#181a20" stroke-width="1.7"/></svg>
<div class="btn" style="left:762px;background:#f6465d">Sell BTC</div>
</div>
</body></html>
